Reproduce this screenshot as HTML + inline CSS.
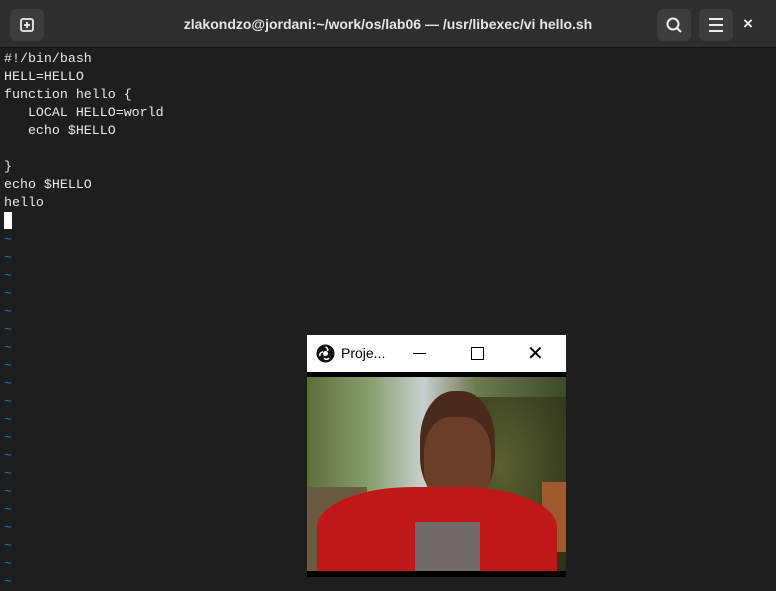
<!DOCTYPE html>
<html><head><style>
body{margin:0;width:776px;height:585px;background:#1e1e1e;overflow:hidden;position:relative;font-family:"Liberation Sans",sans-serif}
.hdr{position:absolute;left:0;top:0;width:776px;height:47px;background:#2e2e2e;border-bottom:1px solid #111}
.btn{position:absolute;top:9px;width:34px;height:32px;background:#3d3d3d;border-radius:6px}
.title{position:absolute;left:0;width:776px;top:16px;text-align:center;color:#e6e6e6;font-weight:bold;font-size:14px}
pre{position:absolute;left:4px;top:50px;margin:0;font-family:"Liberation Mono",monospace;font-size:13.3px;line-height:18px;color:#e8e8e8}
.t{color:#3b6fb5}
.cur{display:inline-block;width:8px;height:17px;background:#fff;vertical-align:-4px}
.win{position:absolute;left:307px;top:335px;width:259px;height:242px;background:#000}
.wt{position:absolute;left:0;top:0;width:259px;height:37px;background:#fff;color:#000;font-size:14px}
.cam{position:absolute;left:0;top:42px;width:259px;height:194px;overflow:hidden;background:linear-gradient(90deg,#5e6e3a 0%,#8aa070 25%,#c8d0d0 45%,#6e7a50 65%,#3e4a28 100%)}
</style></head><body>
<div class="hdr">
<div class="btn" style="left:10px"><svg width="34" height="32"><rect x="11" y="10" width="12" height="12" rx="2" fill="none" stroke="#eee" stroke-width="1.8"/><path d="M17 13v6M14 16h6" stroke="#eee" stroke-width="1.8"/></svg></div>
<div class="title">zlakondzo@jordani:~/work/os/lab06 — /usr/libexec/vi hello.sh</div>
<div class="btn" style="left:657px"><svg width="34" height="32"><circle cx="16" cy="15" r="5.5" fill="none" stroke="#eee" stroke-width="2"/><path d="M20 19l4 4" stroke="#eee" stroke-width="2"/></svg></div>
<div class="btn" style="left:699px"><svg width="34" height="32"><path d="M10 10h14M10 16h14M10 22h14" stroke="#eee" stroke-width="2"/></svg></div>
<div style="position:absolute;left:743px;top:14px;color:#eee;font-size:17px;font-weight:bold">×</div>
</div>
<pre>#!/bin/bash
HELL=HELLO
function hello {
   LOCAL HELLO=world
   echo $HELLO

}
echo $HELLO
hello
<span class="cur"></span>
<span class="t">~
~
~
~
~
~
~
~
~
~
~
~
~
~
~
~
~
~
~
~</span></pre>
<div class="win">
<div class="wt">
<svg style="position:absolute;left:9px;top:9px" width="19" height="19"><circle cx="9.5" cy="9.5" r="9" fill="#111"/><circle cx="9.5" cy="9.5" r="2.5" fill="#fff"/><path d="M9.5 3a3 3 0 0 1 2 4M4 12a3 3 0 0 1 3-4M13 14a3 3 0 0 1-5 0" stroke="#fff" stroke-width="1.5" fill="none"/></svg>
<span style="position:absolute;left:34px;top:10px">Proje...</span>
<div style="position:absolute;left:106px;top:18px;width:13px;height:1px;background:#000"></div>
<div style="position:absolute;left:164px;top:12px;width:11px;height:11px;border:1px solid #000"></div>
<span style="position:absolute;left:220px;top:6px;font-size:20px">✕</span>
</div>
<div class="cam">
<div style="position:absolute;left:150px;top:20px;width:109px;height:174px;background:radial-gradient(ellipse at 40% 40%,#5a6030,#2a3018)"></div>
<div style="position:absolute;left:0;top:110px;width:60px;height:84px;background:#6a5a40"></div>
<div style="position:absolute;left:235px;top:105px;width:24px;height:70px;background:#a05a30"></div>
<div style="position:absolute;left:113px;top:14px;width:75px;height:110px;border-radius:45% 45% 40% 40%;background:#4a2a1a"></div>
<div style="position:absolute;left:117px;top:40px;width:67px;height:88px;border-radius:40%;background:#6a3e28"></div>
<div style="position:absolute;left:10px;top:110px;width:240px;height:100px;border-radius:40% 40% 0 0;background:#c01818"></div>
<div style="position:absolute;left:108px;top:145px;width:65px;height:60px;background:#706a68"></div>
</div>
</div>
</body></html>
